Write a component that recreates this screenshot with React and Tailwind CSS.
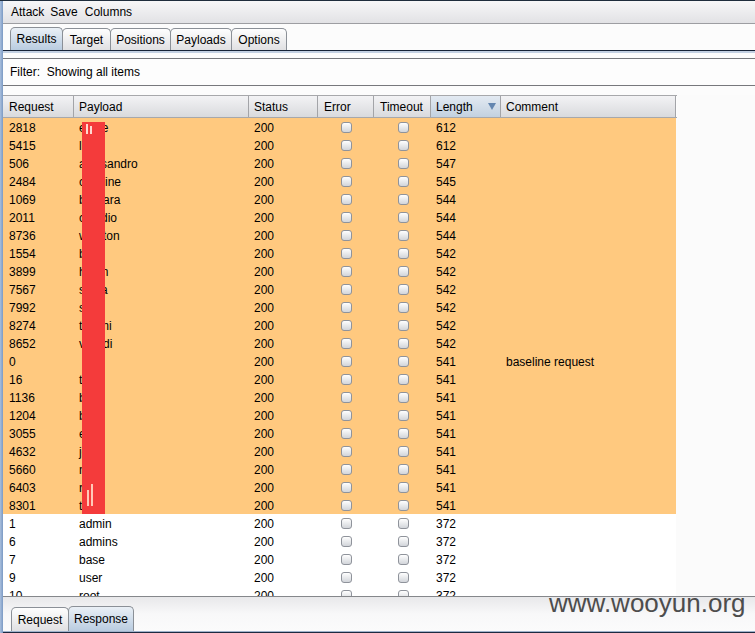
import React from "react";

const rows = [
  ["2818", "eddie", "612", "", true],
  ["5415", "lisa", "612", "", true],
  ["506", "alessandro", "547", "", true],
  ["2484", "caroline", "545", "", true],
  ["1069", "barbara", "544", "", true],
  ["2011", "claudio", "544", "", true],
  ["8736", "winston", "544", "", true],
  ["1554", "bob", "542", "", true],
  ["3899", "helen", "542", "", true],
  ["7567", "sonia", "542", "", true],
  ["7992", "sam", "542", "", true],
  ["8274", "tommi", "542", "", true],
  ["8652", "vivaldi", "542", "", true],
  ["0", "", "541", "baseline request", true],
  ["16", "test", "541", "", true],
  ["1136", "ben", "541", "", true],
  ["1204", "bill", "541", "", true],
  ["3055", "eva", "541", "", true],
  ["4632", "john", "541", "", true],
  ["5660", "nick", "541", "", true],
  ["6403", "rob", "541", "", true],
  ["8301", "tom", "541", "", true],
  ["1", "admin", "372", "", false],
  ["6", "admins", "372", "", false],
  ["7", "base", "372", "", false],
  ["9", "user", "372", "", false],
  ["10", "root", "372", "", false],
];

function Checkbox() {
  return (
    <div className="w-[11px] h-[11px] rounded-[3px] border border-[#8f939b] bg-gradient-to-b from-[#ffffff] to-[#d2d5da]" />
  );
}

function HeaderCell({ w, children, sorted, first }) {
  return (
    <div
      className={`h-full flex items-center shrink-0 border-r border-[#a3a4a8] ${
        first ? "pl-[6px]" : "pl-[5px]"
      } ${
        sorted
          ? "bg-gradient-to-b from-[#e3eaf2] to-[#c3d1e0]"
          : "bg-gradient-to-b from-[#f3f3f5] to-[#d9dadd]"
      } relative`}
      style={{ width: w }}
    >
      {children}
      {sorted && (
        <svg
          className="absolute left-[57px] top-[7px]"
          width="8"
          height="7"
          viewBox="0 0 8 7"
        >
          <path d="M0 0 L8 0 L4 7 Z" fill="#6486b0" />
        </svg>
      )}
    </div>
  );
}

const widths = [71, 175, 69, 56, 57, 70, 175];

function Tab({ label, selected, w, first, h }) {
  return (
    <div
      className={`${first ? "" : "-ml-px"} flex items-center justify-center border border-b-0 border-[#8b9097] rounded-t-[5px] ${
        selected
          ? "bg-gradient-to-b from-[#eaf0f6] to-[#b9cce0] z-10"
          : "bg-gradient-to-b from-[#fefefe] to-[#e0e0e2]"
      }`}
      style={{ width: w, height: h }}
    >
      {label}
    </div>
  );
}

export default function App() {
  return (
    <div className="w-[755px] h-[633px] relative overflow-hidden flex flex-col bg-[#fbfbfb] font-['Liberation_Sans',Arial,sans-serif] text-[12px] text-black leading-none">
      <div className="h-[1px] bg-[#1f2d3c] shrink-0" />
      <div className="flex flex-1 min-h-0">
        <div className="w-[3px] shrink-0 bg-gradient-to-r from-[#a9bfdd] to-[#7b9ac4]" />
        <div className="flex-1 flex flex-col min-w-0">
          {/* menu bar */}
          <div className="h-[23px] shrink-0 flex items-center gap-[6px] pl-[8px] bg-gradient-to-b from-[#f7f7f8] to-[#e2e2e5] border-b border-[#9d9ea2]">
            <span>Attack</span>
            <span>Save</span>
            <span className="ml-[1px]">Columns</span>
          </div>
          {/* tab strip */}
          <div className="h-[26px] shrink-0 flex items-end pl-[7px] bg-[#fcfcfc]">
            <Tab label="Results" selected w={53} first h={23} />
            <Tab label="Target" w={49} h={22} />
            <Tab label="Positions" w={61} h={22} />
            <Tab label="Payloads" w={62} h={22} />
            <Tab label="Options" w={56} h={22} />
          </div>
          <div className="h-[1px] shrink-0 bg-[#172338]" />
          <div className="h-[2px] shrink-0 bg-[#c3d0e2]" />
          <div className="h-[5px] shrink-0 bg-[#fcfcfc]" />
          {/* filter */}
          <div className="h-[28px] shrink-0 flex items-center pl-[7px] border-t border-b border-[#77787c] bg-[#fdfdfd] whitespace-pre">
            {"Filter:  Showing all items"}
          </div>
          <div className="h-[9px] shrink-0 bg-[#fcfcfc]" />
          {/* table */}
          <div className="flex-1 min-h-0 flex flex-col relative">
            <div className="h-[23px] shrink-0 flex border-t border-b border-[#a7a8ab] bg-[#fdfdfd] w-[674px]">
              <HeaderCell w={widths[0]} first>Request</HeaderCell>
              <HeaderCell w={widths[1]}>Payload</HeaderCell>
              <HeaderCell w={widths[2]}>Status</HeaderCell>
              <HeaderCell w={widths[3]}>
                <span className="pl-[1px]">Error</span>
              </HeaderCell>
              <HeaderCell w={widths[4]}>
                <span className="pl-[1px]">Timeout</span>
              </HeaderCell>
              <HeaderCell w={widths[5]} sorted>Length</HeaderCell>
              <HeaderCell w={widths[6]}>Comment</HeaderCell>
            </div>
            <div className="h-[478px] shrink-0 overflow-hidden bg-[#fbfbfb] relative">
              {rows.map(([req, payload, len, comment, hi], i) => (
                <div
                  key={i}
                  className={`h-[18px] w-[673px] flex items-center pt-[1px] ${
                    hi ? "bg-[#ffc97f]" : "bg-white"
                  }`}
                >
                  <div className="pl-[6px] shrink-0" style={{ width: widths[0] }}>{req}</div>
                  <div className="pl-[5px] shrink-0" style={{ width: widths[1] }}>{payload}</div>
                  <div className="pl-[5px] shrink-0" style={{ width: widths[2] }}>200</div>
                  <div className="shrink-0 flex justify-center pl-[1px]" style={{ width: widths[3] }}>
                    <Checkbox />
                  </div>
                  <div className="shrink-0 flex justify-center pl-[1px]" style={{ width: widths[4] }}>
                    <Checkbox />
                  </div>
                  <div className="pl-[5px] shrink-0" style={{ width: widths[5] }}>{len}</div>
                  <div className="pl-[5px] shrink-0" style={{ width: widths[6] }}>{comment}</div>
                </div>
              ))}
              {/* redaction */}
              <div className="absolute left-[79px] top-[4px] w-[23px] h-[392px] bg-[#f43b3b]" />
              <div className="absolute left-[83px] top-[6px] w-[2px] h-[10px] bg-[#ffd9d0]" />
              <div className="absolute left-[87px] top-[8px] w-[2px] h-[8px] bg-[#ffd9d0]" />
              <div className="absolute left-[84px] top-[372px] w-[2px] h-[16px] bg-[#ffc9b8]" />
              <div className="absolute left-[88px] top-[366px] w-[2px] h-[22px] bg-[#ffc9b8]" />
            </div>
            <div className="h-[1px] shrink-0 bg-[#85878b]" />
            {/* bottom tabs */}
            <div className="flex-1 flex items-end pl-[8px] bg-gradient-to-b from-[#e8e8ea] via-[#f8f8f9] to-[#fbfbfb]">
              <Tab label="Request" w={58} first h={24} />
              <Tab label="Response" selected w={66} h={25} />
            </div>
            <div className="h-[1px] shrink-0 bg-[#9fb3cc]" />
            <div className="h-[1px] shrink-0 bg-[#1c2a40]" />
          </div>
        </div>
      </div>
      <div className="absolute left-[549px] top-[590px] text-[26px] leading-[26px] text-[#3b3b3b] font-['Liberation_Sans',Arial,sans-serif] opacity-90">
        www.wooyun.org
      </div>
    </div>
  );
}
